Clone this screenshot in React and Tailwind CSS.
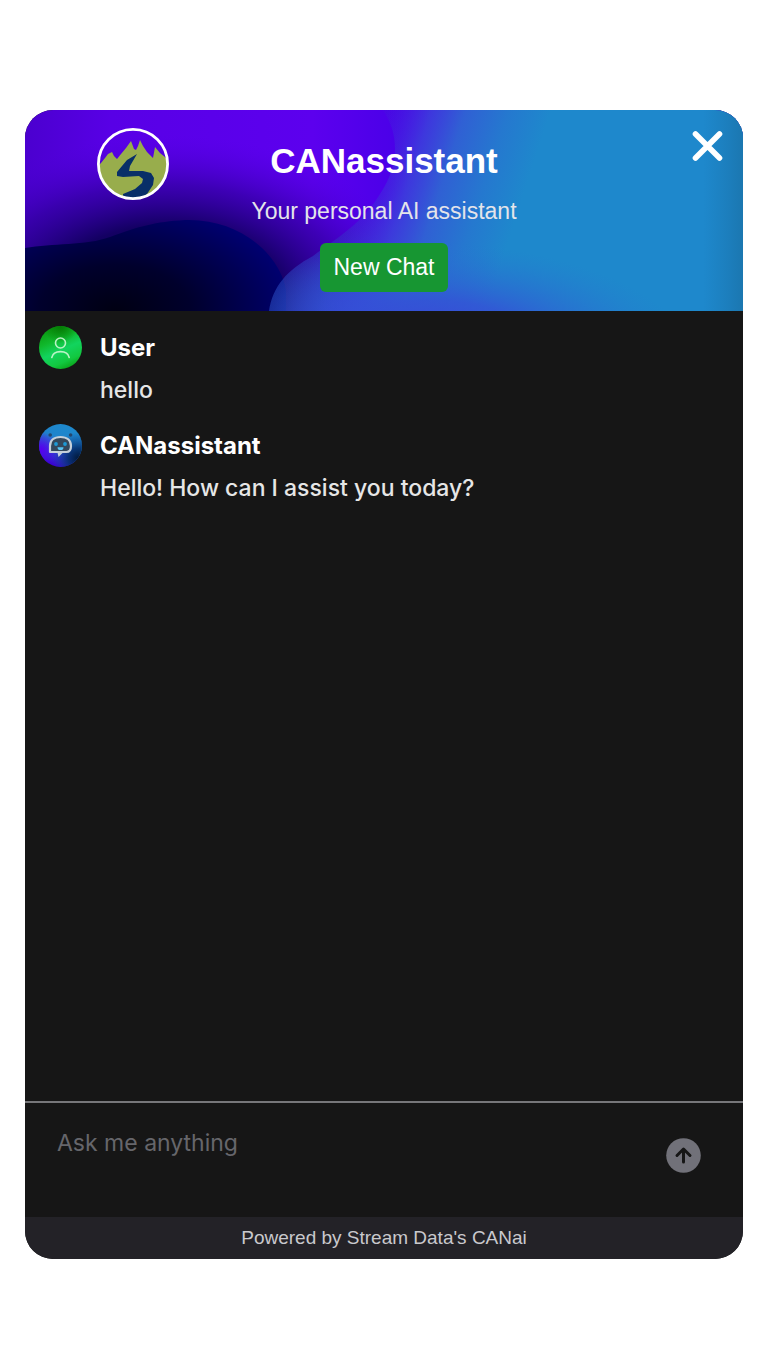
import React from "react";

function HeaderBackdrop() {
  return (
    <svg
      aria-hidden="true"
      className="absolute inset-0 h-full w-full"
      viewBox="0 0 718 201"
      preserveAspectRatio="none"
    >
      <defs>
        <linearGradient id="base" x1="0" x2="1" y1="0" y2="0">
          <stop offset="0" stopColor="#4b00cf" />
          <stop offset="0.12" stopColor="#5800e6" />
          <stop offset="0.4" stopColor="#5c00ee" />
          <stop offset="0.52" stopColor="#4a00e8" />
          <stop offset="1" stopColor="#4a00e8" />
        </linearGradient>
        <radialGradient id="shade" gradientUnits="userSpaceOnUse" cx="0" cy="0" r="1" gradientTransform="translate(140 190) scale(265 165)">
          <stop offset="0" stopColor="#000030" />
          <stop offset="0.45" stopColor="#10005c" stopOpacity="0.95" />
          <stop offset="0.7" stopColor="#2a0092" stopOpacity="0.6" />
          <stop offset="1" stopColor="#5000e0" stopOpacity="0" />
        </radialGradient>
        <radialGradient id="navy" gradientUnits="userSpaceOnUse" cx="0" cy="0" r="1" gradientTransform="translate(90 201) scale(190 115)">
          <stop offset="0" stopColor="#000012" />
          <stop offset="0.4" stopColor="#00002c" />
          <stop offset="0.75" stopColor="#000058" />
          <stop offset="1" stopColor="#000078" />
        </radialGradient>
        <linearGradient id="sky" gradientUnits="userSpaceOnUse" x1="355" y1="0" x2="510" y2="50">
          <stop offset="0" stopColor="#4a18e4" stopOpacity="0" />
          <stop offset="0.3" stopColor="#3c40dc" stopOpacity="0.85" />
          <stop offset="0.5" stopColor="#3060d4" />
          <stop offset="0.75" stopColor="#2578cf" />
          <stop offset="1" stopColor="#1e88cc" />
        </linearGradient>
        <radialGradient id="dome" gradientUnits="userSpaceOnUse" cx="0" cy="0" r="1" gradientTransform="translate(350 201) scale(125 115)">
          <stop offset="0" stopColor="#3646d6" stopOpacity="0.9" />
          <stop offset="0.4" stopColor="#3440cc" stopOpacity="0.8" />
          <stop offset="1" stopColor="#3030c0" stopOpacity="0.1" />
        </radialGradient>
        <radialGradient id="glow" gradientUnits="userSpaceOnUse" cx="0" cy="0" r="1" gradientTransform="translate(420 222) rotate(4) scale(240 90)">
          <stop offset="0" stopColor="#3a48d8" />
          <stop offset="0.35" stopColor="#3452d6" stopOpacity="0.85" />
          <stop offset="1" stopColor="#2676d0" stopOpacity="0" />
        </radialGradient>
        <linearGradient id="edge" x1="0" x2="1" y1="0" y2="0">
          <stop offset="0" stopColor="#1b7ab8" stopOpacity="0" />
          <stop offset="1" stopColor="#1b77b0" />
        </linearGradient>
        <clipPath id="right">
          <path d="M244 201C248 176 262 160 288 146C315 126 338 112 355 84C375 54 374 24 358 0H718V201Z" />
        </clipPath>
      </defs>
      <rect width="718" height="201" fill="url(#base)" />
      <rect width="718" height="201" fill="url(#shade)" />
      <path d="M0 138C28 133 60 136 85 127C115 116 130 112 160 110C215 108 255 145 261 180V201H0Z" fill="url(#navy)" />
      <g clipPath="url(#right)">
        <rect x="240" width="478" height="201" fill="url(#dome)" />
        <rect x="240" width="478" height="201" fill="url(#sky)" />
        <rect x="240" width="478" height="201" fill="url(#glow)" />
      </g>
      <rect x="678" width="40" height="201" fill="url(#edge)" />
    </svg>
  );
}

function Logo() {
  return (
    <svg viewBox="0 0 72 72" className="h-[72px] w-[72px]" role="img" aria-label="Mountain and river logo">
      <defs>
        <clipPath id="disc">
          <circle cx="36" cy="36" r="34" />
        </clipPath>
      </defs>
      <g clipPath="url(#disc)">
        <path d="M0 39L4 35L8 30L11 26L15 24L17 28L20 31L24 26L29 20L34 13L37 21L39 22L41 18L43 12L46 18L50 24L56 30L58 19L63 25L68 29L72 34V72H0Z" fill="#98ad4c" />
        <path d="M40 26L30 32L25 38L20 44L20 48L26 49L42 48L46 51L45 55L38 61L26 66V72H40L50 66L56 57L57 50L54 45L46 43L32 43L33 38Z" fill="#082f68" />
      </g>
      <circle cx="36" cy="36" r="34.6" fill="none" stroke="#fff" strokeWidth="2.8" />
    </svg>
  );
}

function UserAvatar() {
  return (
    <svg viewBox="0 0 43 43" className="h-[43px] w-[43px] shrink-0" aria-hidden="true">
      <defs>
        <linearGradient id="green" x1="0.3" y1="0" x2="0.75" y2="1">
          <stop offset="0" stopColor="#0a9a10" />
          <stop offset="0.3" stopColor="#10b82c" />
          <stop offset="0.55" stopColor="#12d45e" />
          <stop offset="0.8" stopColor="#12c840" />
          <stop offset="1" stopColor="#089c10" />
        </linearGradient>
        <radialGradient id="greenTop" cx="0.5" cy="0" r="0.4">
          <stop offset="0" stopColor="#047a04" />
          <stop offset="1" stopColor="#047a04" stopOpacity="0" />
        </radialGradient>
      </defs>
      <circle cx="21.5" cy="21.5" r="21.5" fill="url(#green)" />
      <circle cx="21.5" cy="21.5" r="21.5" fill="url(#greenTop)" />
      <g fill="none" stroke="#b9f3c4" strokeWidth="1.6" strokeLinecap="round">
        <circle cx="21.5" cy="17" r="5" />
        <path d="M12.8 31.5C13.6 27.5 17 25.6 21.5 25.6S29.4 27.5 30.2 31.5" />
      </g>
    </svg>
  );
}

function BotAvatar() {
  return (
    <svg viewBox="0 0 43 43" className="h-[43px] w-[43px] shrink-0" aria-hidden="true">
      <defs>
        <linearGradient id="botBase" x1="0.2" y1="0.9" x2="0.6" y2="0.1">
          <stop offset="0" stopColor="#3a00d0" />
          <stop offset="0.4" stopColor="#3050d4" />
          <stop offset="0.7" stopColor="#1f84cc" />
          <stop offset="1" stopColor="#1e88cc" />
        </linearGradient>
        <radialGradient id="botViolet" cx="0.06" cy="0.6" r="0.4">
          <stop offset="0" stopColor="#5600f0" />
          <stop offset="1" stopColor="#4a10e6" stopOpacity="0" />
        </radialGradient>
        <radialGradient id="botDark" cx="0.92" cy="0.8" r="0.6">
          <stop offset="0" stopColor="#001838" />
          <stop offset="0.4" stopColor="#042c68" stopOpacity="0.85" />
          <stop offset="1" stopColor="#0c3c90" stopOpacity="0" />
        </radialGradient>
      </defs>
      <circle cx="21.5" cy="21.5" r="21.5" fill="url(#botBase)" />
      <circle cx="21.5" cy="21.5" r="21.5" fill="url(#botDark)" />
      <circle cx="21.5" cy="21.5" r="21.5" fill="url(#botViolet)" />
      <circle cx="11.2" cy="11" r="1.8" fill="#25476c" />
      <circle cx="31.6" cy="11" r="1.8" fill="#25476c" />
      <path d="M11 28V22C11 16.5 15 13 21.5 13S32 16.5 32 22C32 26 30.8 28 27.5 28Z" fill="#34485c" stroke="#c6d0da" strokeWidth="2.2" strokeLinejoin="round" />
      <path d="M18.5 28.5H24L19.5 33Z" fill="#c6d0da" />
      <circle cx="17" cy="20" r="1.9" fill="#1d9ad6" />
      <circle cx="26" cy="20" r="1.9" fill="#1d9ad6" />
      <path d="M18.5 23.2H24.5C24.5 25.2 23.5 26 21.5 26S18.5 25.2 18.5 23.2Z" fill="#58c4f4" />
    </svg>
  );
}

function Message({ avatar, name, children }) {
  return (
    <article className="flex gap-[18px]">
      {avatar}
      <div className="pt-1">
        <h2 className="text-[24px] leading-9 font-bold text-white">{name}</h2>
        <p className="mt-2 text-[23px] leading-8 font-medium text-[#e6e6e6]">{children}</p>
      </div>
    </article>
  );
}

export default function App() {
  return (
    <div className="min-h-screen bg-white px-[25px] pt-[110px] font-['Inter',sans-serif]">
      <main className="flex min-h-[1149px] flex-col overflow-hidden rounded-[28px] bg-[#161616]">
        <header className="relative flex min-h-[201px] flex-col items-center overflow-hidden pt-[30px] font-['Liberation_Sans',Arial,sans-serif]">
          <HeaderBackdrop />
          <div className="absolute top-[18px] left-[72px]">
            <Logo />
          </div>
          <button type="button" aria-label="Close" className="absolute top-5 right-5 h-8 w-8 text-white">
            <svg viewBox="0 0 32 32" className="h-8 w-8" aria-hidden="true">
              <path d="M4.5 4L28.5 28M28.5 4L4.5 28" stroke="currentColor" strokeWidth="5.6" strokeLinecap="round" />
            </svg>
          </button>
          <h1 className="relative text-[35px] leading-[42px] font-bold text-white">CANassistant</h1>
          <p className="relative mt-[15px] text-[23px] leading-7 text-[#e4e4ea]">Your personal AI assistant</p>
          <button type="button" className="relative mt-[18px] h-[49px] rounded-md bg-[#179632] px-[14px] text-[23px] text-white">
            New Chat
          </button>
        </header>

        <section aria-label="Conversation" className="flex flex-1 flex-col gap-[18px] px-[14px] pt-[15px]">
          <Message avatar={<UserAvatar />} name="User">hello</Message>
          <Message avatar={<BotAvatar />} name="CANassistant">Hello! How can I assist you today?</Message>
        </section>

        <form
          className="flex h-[116px] items-start border-t-2 border-[#77777a] pr-[42px] pl-8"
          onSubmit={(event) => event.preventDefault()}
        >
          <textarea
            aria-label="Ask me anything"
            placeholder="Ask me anything"
            rows={1}
            className="mt-[22px] h-9 min-w-0 flex-1 resize-none bg-transparent text-[23px] leading-9 text-white placeholder-[#66666b] outline-none"
          />
          <button type="submit" aria-label="Send" className="mt-[35px] h-[35px] w-[35px]">
            <svg viewBox="0 0 35 35" className="h-[35px] w-[35px]" aria-hidden="true">
              <circle cx="17.5" cy="17.5" r="17.3" fill="#717179" />
              <path d="M17.5 24V11.5M11 17.5L17.5 11L24 17.5" fill="none" stroke="#161616" strokeWidth="3" strokeLinecap="round" strokeLinejoin="round" />
            </svg>
          </button>
        </form>

        <footer className="flex h-[42px] items-center justify-center bg-[#232227] font-['Liberation_Sans',Arial,sans-serif] text-[19px] text-[#c9c9cd]">
          Powered by Stream Data's CANai
        </footer>
      </main>
    </div>
  );
}
